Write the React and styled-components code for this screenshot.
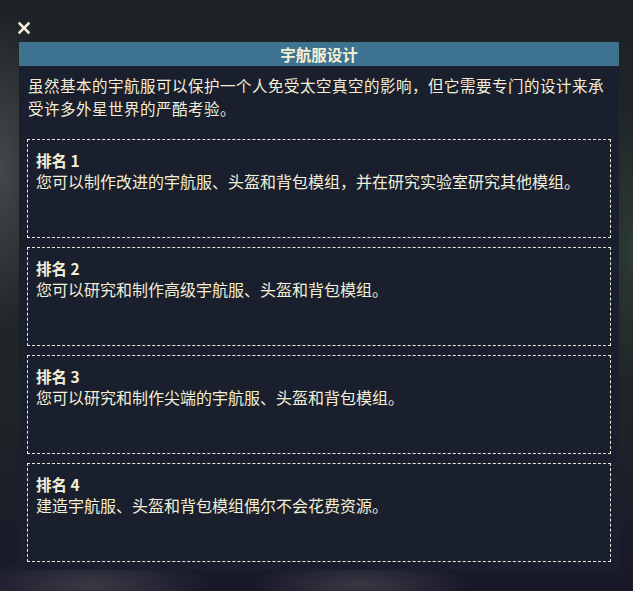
import React from "react";
import styled, { createGlobalStyle } from "styled-components";

const Global = createGlobalStyle`
  html, body {
    margin: 0;
    height: 100%;
  }
  body {
    font-family: "Noto Sans CJK SC", "Noto Sans", sans-serif;
    background:
      radial-gradient(ellipse 60px 160px at 0px 170px, #45484a 0%, rgba(60,62,64,0) 100%),
      radial-gradient(ellipse 120px 30px at 90px 585px, #3a3a46 0%, rgba(50,50,60,0) 100%),
      radial-gradient(ellipse 110px 25px at 360px 585px, #3a3844 0%, rgba(50,50,60,0) 100%),
      radial-gradient(ellipse 40px 140px at 633px 250px, #2c3a36 0%, rgba(40,50,48,0) 100%),
      linear-gradient(180deg, #1d2226 0%, #22272a 30%, #1f2427 70%, #18182a 100%);
    overflow: hidden;
  }
`;

const Page = styled.div`
  display: flex;
  flex-direction: column;
  padding: 22px 14px 0 19px;
  color: #f3eed6;
`;

const CloseButton = styled.button`
  align-self: flex-start;
  width: 12px;
  height: 12px;
  margin: 0 0 8px -1px;
  padding: 0;
  border: 0;
  background: none;
  display: flex;
  cursor: pointer;
`;

const Panel = styled.section`
  width: 600px;
  background: #1a1f2e;
  display: flex;
  flex-direction: column;
  padding-bottom: 8px;
`;

const Header = styled.h1`
  margin: 0;
  height: 24px;
  background: #3d7291;
  color: #f5efd6;
  font-size: 15.5px;
  font-weight: 700;
  line-height: 24px;
  text-align: center;
`;

const Intro = styled.p`
  margin: 0;
  padding: 8px 12px 19px 9px;
  font-size: 15.5px;
  letter-spacing: 0.5px;
  line-height: 23px;
`;

const List = styled.div`
  display: flex;
  flex-direction: column;
  gap: 9px;
  padding: 0 8px;
`;

const Card = styled.div`
  box-sizing: border-box;
  height: 99px;
  border: 1px dashed #f0ecdc;
  padding: 10px 8px 0 8px;
`;

const CardTitle = styled.div`
  font-size: 15.5px;
  font-weight: 700;
  line-height: 20px;
`;

const CardText = styled.div`
  font-size: 16px;
  line-height: 22px;
`;

const ranks = [
  "您可以制作改进的宇航服、头盔和背包模组，并在研究实验室研究其他模组。",
  "您可以研究和制作高级宇航服、头盔和背包模组。",
  "您可以研究和制作尖端的宇航服、头盔和背包模组。",
  "建造宇航服、头盔和背包模组偶尔不会花费资源。",
];

export default function App() {
  return (
    <Page>
      <Global />
      <CloseButton aria-label="关闭">
        <svg width="12" height="12" viewBox="0 0 12 12">
          <path d="M1.5 1.5 L10.5 10.5 M10.5 1.5 L1.5 10.5" stroke="#f3eed6" strokeWidth="2.6" strokeLinecap="square" />
        </svg>
      </CloseButton>
      <Panel>
        <Header>宇航服设计</Header>
        <Intro>
          虽然基本的宇航服可以保护一个人免受太空真空的影响，但它需要专门的设计来承受许多外星世界的严酷考验。
        </Intro>
        <List>
          {ranks.map((text, i) => (
            <Card key={i}>
              <CardTitle>排名 {i + 1}</CardTitle>
              <CardText>{text}</CardText>
            </Card>
          ))}
        </List>
      </Panel>
    </Page>
  );
}
